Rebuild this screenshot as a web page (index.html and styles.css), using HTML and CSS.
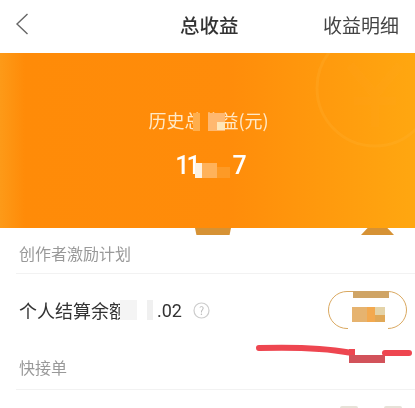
FILE: index.html
```html
<!DOCTYPE html>
<html lang="zh-CN">
<head>
    <meta charset="UTF-8">
    <meta name="viewport" content="width=device-width, initial-scale=1.0">
    <title>总收益</title>
    <link rel="stylesheet" href="styles.css">
</head>
<body>
    <div class="page">
        <header class="topbar">
            <a href="#" class="back">
                <svg width="14" height="22" viewBox="0 0 14 22"><path d="M12.5 1 2 11l10.5 10" fill="none" stroke="#666" stroke-width="1.4"/></svg>
            </a>
            <h1 class="title">总收益</h1>
            <a href="#" class="detail">收益明细</a>
        </header>

        <section class="hero">
            <svg class="hero-ring" width="130" height="130" viewBox="0 0 130 130"><circle cx="65" cy="65" r="58" fill="none" stroke="#ffb63a" stroke-opacity="0.22" stroke-width="3"/><path d="M40 42 65 72 90 42M44 78h42M65 72v32" fill="none" stroke="#ffb63a" stroke-opacity="0.05" stroke-width="9"/></svg>
            <p class="hero-label">历史总收益(元)</p>
            <p class="hero-value">11<span class="gap"></span>7</p>
            <i class="patch patch-a"></i>
            <i class="patch patch-b"></i>
            <i class="patch patch-c"></i>
            <i class="patch patch-d"></i>
            <i class="patch patch-e"></i>
        </section>

        <div class="tabs-marks">
            <i class="mark mark-left"></i>
            <i class="mark mark-right"></i>
        </div>

        <div class="row-label row-first">创作者激励计划</div>

        <div class="row-balance">
            <div class="balance">
                <span>个人结算余额</span><span class="balance-gap"></span><span class="amount">.02</span>
                <svg class="help" width="17" height="17" viewBox="0 0 17 17"><circle cx="8.5" cy="8.5" r="7.5" fill="none" stroke="#ccc" stroke-width="1.2"/><text x="8.5" y="12.5" text-anchor="middle" font-size="11" fill="#bbb">?</text></svg>
            </div>
            <div class="pill">
                <i class="pill-top"></i>
                <i class="pill-cover"></i>
                <i class="pill-mosaic"></i>
            </div>
        </div>

        <div class="row-label row-last">快接单</div>

        <svg class="scribble" width="160" height="24" viewBox="0 0 160 24"><path d="M4 5C40 4 70 5 94 9.5" fill="none" stroke="#ee4650" stroke-width="6" stroke-linecap="round"/><rect x="94" y="6" width="6" height="7" fill="#ee4650"/><rect x="94" y="12" width="36" height="8" fill="#d2525a"/><path d="M130 10h24" fill="none" stroke="#ee4650" stroke-width="6" stroke-linecap="round"/></svg>
        <div class="peek"><i></i><i></i></div>
    </div>
</body>
</html>
```

FILE: styles.css
```css
* {
    margin: 0;
    padding: 0;
    box-sizing: border-box;
}

html, body {
    width: 415px;
    height: 408px;
    overflow: hidden;
    background: #fff;
}

body {
    font-family: "Noto Sans CJK SC", "Noto Sans", sans-serif;
    color: #333;
}

.page {
    position: relative;
    height: 408px;
    overflow: hidden;
    filter: blur(0.4px);
}

.topbar {
    height: 53px;
    display: flex;
    align-items: center;
    justify-content: space-between;
    padding: 0 16px 5px 15px;
    position: relative;
}

.back {
    display: flex;
}

.title {
    position: absolute;
    left: 180px;
    font-size: 19.5px;
    font-weight: 500;
    color: #333;
}

.detail {
    font-size: 19px;
    color: #444;
    text-decoration: none;
}

/* orange banner */
.hero {
    position: relative;
    height: 175px;
    display: flex;
    flex-direction: column;
    align-items: center;
    padding: 53px 0 0 2px;
    overflow: hidden;
    background: linear-gradient(90deg, #fd9a18 0, #ff8b08 25px, #ff8c0a 55%, #ffa710 100%);
}

.hero-ring {
    position: absolute;
    left: 310px;
    top: -30px;
}

.hero-label {
    font-size: 18px;
    line-height: 28px;
    color: #ffe9c8;
}

.hero-value {
    display: flex;
    margin: 17px 0 0 2px;
    font-family: Roboto, sans-serif;
    font-size: 25px;
    font-weight: 500;
    line-height: 30px;
    letter-spacing: -3px;
    color: #fff;
}

.gap {
    width: 35px;
}

.patch {
    position: absolute;
    display: block;
}

.patch-a {
    left: 193px;
    top: 60px;
    width: 32px;
    height: 18px;
    background: linear-gradient(90deg, #ffae4c 0 22%, #ff8c0a 22% 47%, #ffb870 47%);
}

.patch-b {
    left: 217px;
    top: 69px;
    width: 8px;
    height: 8px;
    background: #ffe6b8;
}

.patch-c {
    left: 195px;
    top: 110px;
    width: 7px;
    height: 15px;
    background: #fff2e0;
}

.patch-d {
    left: 202px;
    top: 110px;
    width: 15px;
    height: 15px;
    background: #ffb25a;
}

.patch-e {
    left: 217px;
    top: 114px;
    width: 13px;
    height: 11px;
    background: #fd9a26;
}

.tabs-marks {
    position: absolute;
    top: 228px;
    left: 0;
    right: 0;
}

.mark {
    position: absolute;
    top: 0;
    height: 7px;
    background: #d69235;
}

.mark-left {
    left: 195px;
    width: 36px;
    clip-path: polygon(0 0, 100% 0, 96% 100%, 4% 100%);
}

.mark-right {
    left: 361px;
    width: 33px;
    clip-path: polygon(20% 0, 80% 0, 100% 100%, 0 100%);
}

.row-label {
    margin-left: 16px;
    padding-left: 3px;
    font-size: 16px;
    color: #999;
    display: flex;
    align-items: center;
}

.row-first {
    height: 46px;
    padding-top: 4px;
    border-bottom: 1px solid #f2f2f2;
}

.row-last {
    height: 50px;
    padding-top: 4px;
    border-bottom: 1px solid #f2f2f2;
}

.row-balance {
    height: 66px;
    display: flex;
    align-items: center;
    justify-content: space-between;
    padding: 6px 8px 0 19px;
    position: relative;
}

.balance {
    display: flex;
    align-items: center;
    font-size: 18px;
    color: #333;
}

/* mosaic over the last character and the hidden digits */
.balance-gap {
    width: 37px;
    height: 20px;
    margin-left: -7px;
    background: linear-gradient(90deg, #f4f4f4 0 45%, #fff 45% 72%, #f0f0f0 72% 90%, #fff 90%);
    position: relative;
}

.amount {
    font-family: Roboto, sans-serif;
    font-size: 18px;
}

.help {
    margin-left: 11px;
}

.pill {
    position: relative;
    width: 79px;
    height: 38px;
    border: 1.5px solid #d9a860;
    border-radius: 19px;
}

.pill-top {
    position: absolute;
    left: 23.5px;
    top: -1.5px;
    width: 36px;
    height: 7.5px;
    background: #cfa465;
}

.pill-cover {
    position: absolute;
    left: 19px;
    top: 14px;
    width: 40px;
    height: 24px;
    background: #fff;
}

.pill-mosaic {
    position: absolute;
    left: 22.5px;
    top: 14.5px;
    width: 33px;
    height: 15px;
    background:
        linear-gradient(#e6b36f, #e6b36f) 0 0 / 15px 100% no-repeat,
        linear-gradient(#f3a94f, #f3a94f) 15px 0 / 8px 100% no-repeat,
        linear-gradient(#e4d3a8, #e4d3a8) 23px 0 / 10px 8px no-repeat,
        linear-gradient(#e0a857, #e0a857) 23px 8px / 10px 7px no-repeat;
}

.scribble {
    position: absolute;
    left: 255px;
    top: 343px;
}

.peek {
    position: absolute;
    left: 340px;
    top: 406px;
    display: flex;
    gap: 26px;
}

.peek i {
    display: block;
    width: 18px;
    height: 2px;
    background: #e6e2d8;
    border-radius: 8px 8px 0 0;
}
```
